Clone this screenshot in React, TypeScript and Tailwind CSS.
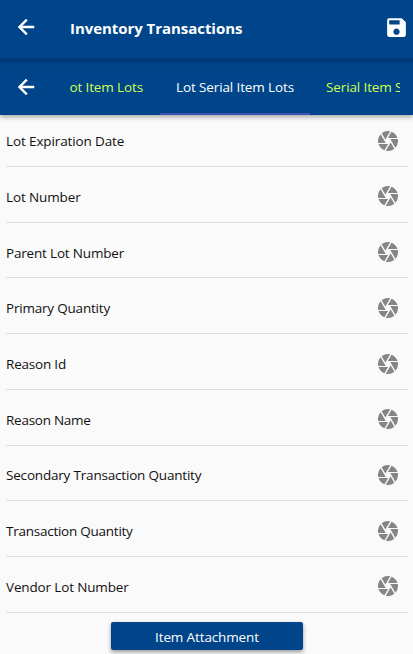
import { MdCamera, MdSave } from "react-icons/md";

const fields = [
  { label: "Lot Expiration Date", tracking: "tracking-[-0.12px]" },
  { label: "Lot Number", tracking: "tracking-[-0.12px]" },
  { label: "Parent Lot Number", tracking: "tracking-[-0.18px]" },
  { label: "Primary Quantity", tracking: "tracking-[-0.2px]" },
  { label: "Reason Id", tracking: "tracking-[-0.2px]" },
  { label: "Reason Name", tracking: "tracking-[-0.26px]" },
  { label: "Secondary Transaction Quantity", tracking: "tracking-[-0.19px]" },
  { label: "Transaction Quantity", tracking: "tracking-[-0.25px]" },
  { label: "Vendor Lot Number", tracking: "tracking-[-0.15px]" },
];

function BackArrow() {
  return (
    <svg viewBox="0 0 24 24" className="size-6 fill-current stroke-current stroke-[0.5]">
      <path d="M20 11H7.83l5.59-5.59L12 4l-8 8 8 8 1.41-1.41L7.83 13H20v-2z" />
    </svg>
  );
}

function TitleBar() {
  return (
    <header className="flex h-[59px] shrink-0 items-center bg-[#004489] pr-1 pl-[14px] text-white">
      <button aria-label="Back" className="mb-[5px]">
        <BackArrow />
      </button>
      <h1 className="-mt-[3px] ml-8 flex-1 text-[15px] leading-5 font-bold tracking-[-0.05px]">
        Inventory Transactions
      </h1>
      <button aria-label="Save" className="mb-[5px]">
        <MdSave size={25} />
      </button>
    </header>
  );
}

function TabBar() {
  return (
    <nav className="z-10 flex h-14 shrink-0 bg-[#004489] bg-linear-to-b from-[#003870] to-[#004489] to-[6px] pr-[13px] pl-[14px] text-white shadow-[0_2px_5px_rgba(0,0,0,0.35)]">
      <button aria-label="Previous tabs">
        <BackArrow />
      </button>
      <div className="ml-8 flex min-w-0 flex-1 overflow-hidden text-[13.5px] tracking-[-0.12px] whitespace-nowrap">
        <div className="flex w-[90px] shrink-0 items-center justify-end pr-[17px] text-[#d2ff52]">
          <span>ot Item Lots</span>
        </div>
        <div className="flex w-[150px] shrink-0 items-center justify-center border-b-2 border-[#3f51b5] pt-0.5">
          <span>Lot Serial Item Lots</span>
        </div>
        <div className="flex shrink-0 items-center pl-4 text-[#d2ff52]">
          <span>Serial Item Serials</span>
        </div>
      </div>
    </nav>
  );
}

export default function App() {
  return (
    <div className="flex h-[654px] w-full flex-col overflow-hidden bg-[#fafafa] font-['Open_Sans','Noto_Sans',sans-serif] text-[13.5px] text-[#111]">
      <TitleBar />
      <TabBar />
      <main className="-mt-[3.6px] flex flex-col pr-[5px] pl-[6px]">
        {fields.map(({ label, tracking }) => (
          <div
            key={label}
            className="flex h-[55.7px] shrink-0 items-center justify-between border-b border-[#dedede] pt-[4px] pr-2"
          >
            <span className={`pt-px ${tracking}`}>{label}</span>
            <MdCamera size={24} className="text-[#858585]" />
          </div>
        ))}
        <button className="mt-[9px] ml-[105px] h-7 w-48 shrink-0 rounded-[2px] bg-[#004489] pt-[3px] tracking-[-0.13px] text-white shadow-[0_2px_4px_rgba(0,0,0,0.4)]">
          Item Attachment
        </button>
      </main>
    </div>
  );
}
